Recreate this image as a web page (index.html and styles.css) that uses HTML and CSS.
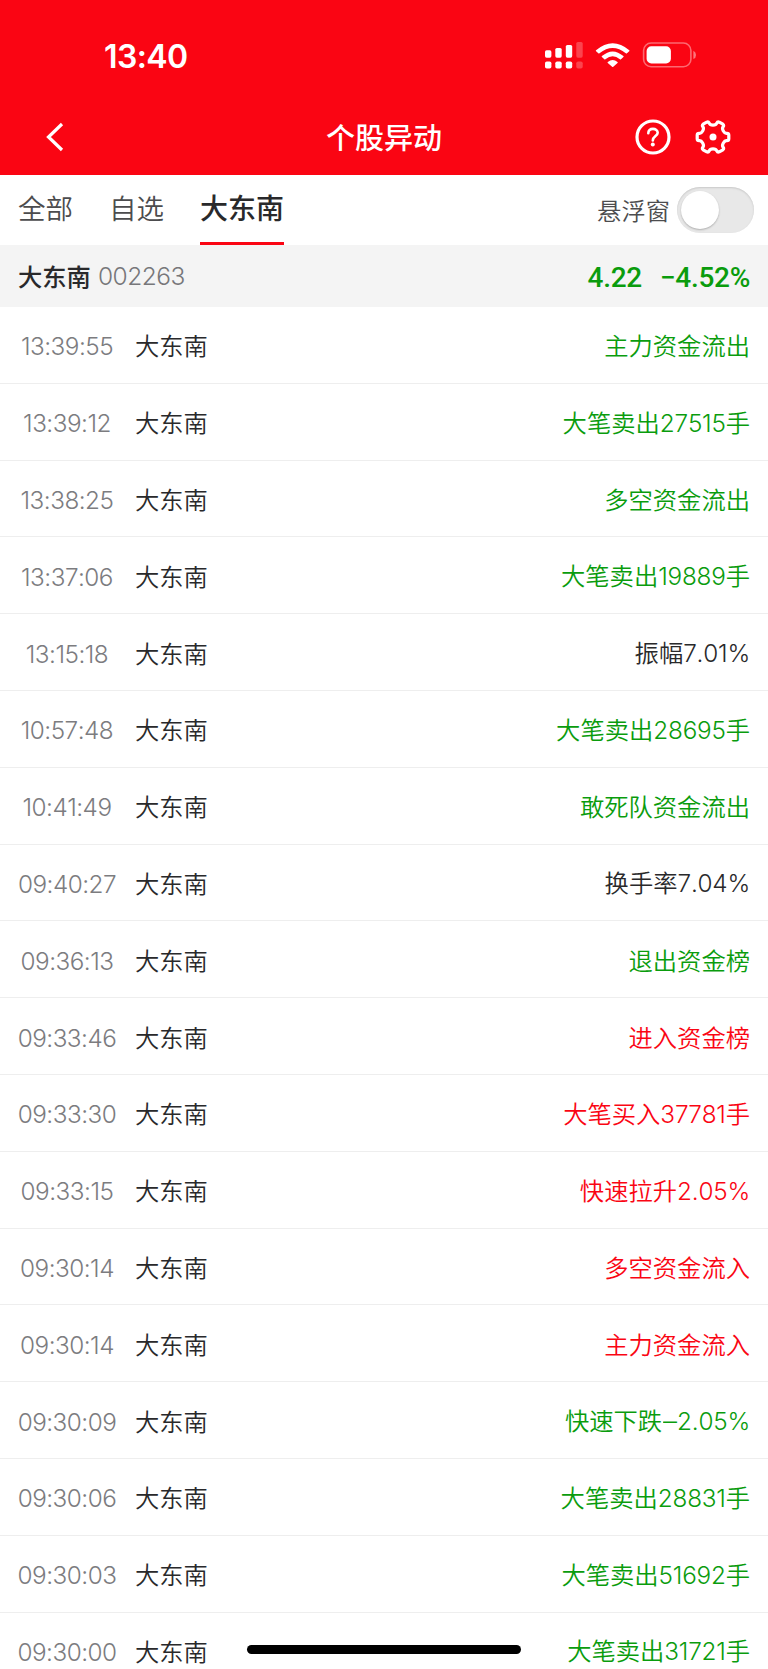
FILE: index.html
```html
<!DOCTYPE html>
<html lang="zh-CN">
<head>
<meta charset="utf-8">
<title>个股异动</title>
<link rel="stylesheet" href="styles.css">
</head>
<body>
<div class="screen">
  <header class="header">
    <div class="status">
      <span class="clock">13:40</span>
      <svg class="status-icons" width="156" height="34" viewBox="0 0 156 34" fill="#fff">
        <g><rect x="1" y="12.3" width="6.4" height="7.4" rx="1.6"/><rect x="11.3" y="10" width="6.4" height="9.7" rx="1.6"/><rect x="21.8" y="7" width="6.4" height="12.7" rx="1.6"/><rect x="1" y="23.5" width="6.4" height="7" rx="1.8"/><rect x="11.3" y="23.5" width="6.4" height="7" rx="1.8"/><rect x="21.8" y="23.5" width="6.4" height="7" rx="1.8"/></g>
        <g opacity=".25"><rect x="32.3" y="4" width="6.4" height="15.7" rx="1.6"/><rect x="32.3" y="23.5" width="6.4" height="7" rx="1.8"/></g>
        <path d="M52 12.2Q68.700 -1.800 85.300 12.200Q85.700 12.700 85.200 13.200L83 15.300Q82.400 15.800 81.800 15.300Q68.700 4.500 55.500 15.300Q54.900 15.800 54.300 15.300L52.100 13.200Q51.600 12.700 52 12.200ZM57.900 18.100Q68.700 8.700 79.400 18.100Q79.900 18.600 79.400 19.100L77 21.300Q76.500 21.700 75.900 21.200Q68.700 15.100 61.400 21.200Q60.800 21.700 60.300 21.300L57.900 19.100Q57.400 18.600 57.900 18.100ZM63.800 23.900Q68.700 20 73.500 23.900Q74 24.400 73.500 24.900L69.300 28.800Q68.700 29.300 68.100 28.800L63.800 24.900Q63.300 24.400 63.800 23.900Z"/>
        <rect x="99.600" y="5" width="47.300" height="23.700" rx="7.500" fill="none" stroke="#fff" stroke-opacity=".4" stroke-width="1.600"/>
        <path opacity=".45" d="M149.400 12.700Q152 13.900 152 16.900Q152 19.900 149.400 21.100Z"/>
        <rect x="102.600" y="8.300" width="24.300" height="17.200" rx="4.800"/>
      </svg>
    </div>
    <div class="nav">
      <svg class="back" width="20" height="32" viewBox="0 0 20 32"><path d="M17 3L3.500 16L17 29" fill="none" stroke="#fff" stroke-width="3.200" stroke-linecap="butt"/></svg>
      <h1 class="title">个股异动</h1>
      <div class="actions">
        <svg width="36" height="36" viewBox="0 0 36 36" fill="none" stroke="#fff"><circle cx="18" cy="18" r="16" stroke-width="3.200"/><path d="M13.300 14.300C13.300 11.400 15.200 9.900 17.900 9.900C20.600 9.900 22.700 11.400 22.700 13.800C22.700 17.100 17.800 17.200 17.800 21.500" stroke-width="2.600" stroke-linecap="round"/><circle cx="17.800" cy="25.600" r="2" fill="#fff" stroke="none"/></svg>
        <svg width="36" height="36" viewBox="0 0 36 36"><path d="M14.300 4.300C15.200 6.800 20.800 6.800 21.700 4.300Q22.600 2.500 24.300 3.200L27.800 5.200Q29.200 6.300 28.100 7.900C26.400 9.900 29.200 14.700 31.700 14.300Q33.700 14.200 33.800 16V20Q33.700 21.800 31.700 21.700C29.200 21.300 26.400 26.100 28.100 28.100Q29.200 29.700 27.800 30.800L24.300 32.800Q22.600 33.500 21.700 31.700C20.800 29.200 15.200 29.200 14.300 31.700Q13.400 33.500 11.700 32.800L8.200 30.800Q6.800 29.700 7.900 28.100C9.600 26.100 6.800 21.300 4.300 21.700Q2.300 21.800 2.200 20V16Q2.300 14.200 4.300 14.300C6.800 14.700 9.600 9.900 7.900 7.900Q6.800 6.300 8.200 5.200L11.700 3.200Q13.400 2.500 14.300 4.300Z" fill="none" stroke="#fff" stroke-width="3.200"/><circle cx="18" cy="18" r="3.500" fill="#fff"/></svg>
      </div>
    </div>
  </header>

  <nav class="tabs">
    <span class="tab">全部</span>
    <span class="tab">自选</span>
    <span class="tab active">大东南</span>
    <span class="float-label">悬浮窗</span>
    <span class="switch"><span class="knob"></span></span>
  </nav>

  <section class="quote">
    <span class="quote-name">大东南</span>
    <span class="quote-code">002263</span>
    <span class="quote-price">4.22</span>
    <span class="quote-change">−4.52%</span>
  </section>

  <main class="list">
    <div class="row"><span class="time">13:39:55</span><span class="name">大东南</span><span class="event down">主力资金流出</span></div>
    <div class="row"><span class="time">13:39:12</span><span class="name">大东南</span><span class="event down">大笔卖出<span class="num">27515</span>手</span></div>
    <div class="row"><span class="time">13:38:25</span><span class="name">大东南</span><span class="event down">多空资金流出</span></div>
    <div class="row"><span class="time">13:37:06</span><span class="name">大东南</span><span class="event down">大笔卖出<span class="num">19889</span>手</span></div>
    <div class="row"><span class="time">13:15:18</span><span class="name">大东南</span><span class="event">振幅<span class="num">7.01%</span></span></div>
    <div class="row"><span class="time">10:57:48</span><span class="name">大东南</span><span class="event down">大笔卖出<span class="num">28695</span>手</span></div>
    <div class="row"><span class="time">10:41:49</span><span class="name">大东南</span><span class="event down">敢死队资金流出</span></div>
    <div class="row"><span class="time">09:40:27</span><span class="name">大东南</span><span class="event">换手率<span class="num">7.04%</span></span></div>
    <div class="row"><span class="time">09:36:13</span><span class="name">大东南</span><span class="event down">退出资金榜</span></div>
    <div class="row"><span class="time">09:33:46</span><span class="name">大东南</span><span class="event up">进入资金榜</span></div>
    <div class="row"><span class="time">09:33:30</span><span class="name">大东南</span><span class="event up">大笔买入<span class="num">37781</span>手</span></div>
    <div class="row"><span class="time">09:33:15</span><span class="name">大东南</span><span class="event up">快速拉升<span class="num">2.05%</span></span></div>
    <div class="row"><span class="time">09:30:14</span><span class="name">大东南</span><span class="event up">多空资金流入</span></div>
    <div class="row"><span class="time">09:30:14</span><span class="name">大东南</span><span class="event up">主力资金流入</span></div>
    <div class="row"><span class="time">09:30:09</span><span class="name">大东南</span><span class="event down">快速下跌<span class="num"><span class="dash">–</span>2.05%</span></span></div>
    <div class="row"><span class="time">09:30:06</span><span class="name">大东南</span><span class="event down">大笔卖出<span class="num">28831</span>手</span></div>
    <div class="row"><span class="time">09:30:03</span><span class="name">大东南</span><span class="event down">大笔卖出<span class="num">51692</span>手</span></div>
    <div class="row"><span class="time">09:30:00</span><span class="name">大东南</span><span class="event down">大笔卖出<span class="num">31721</span>手</span></div>
  </main>
  <div class="home-indicator"></div>
</div>
</body>
</html>
```
FILE: styles.css
```css
* { box-sizing: border-box; }
body {
  margin: 0;
  background: #fff;
  font-family: "Noto Sans CJK SC", sans-serif;
  color: #29292b;
}
.screen {
  position: relative;
  width: 768px;
  height: 1669px;
  overflow: hidden;
}
.header {
  height: 175px;
  background: #fa0513;
  color: #fff;
}
.status {
  height: 100px;
  padding: 38px 68px 0 104px;
  display: flex;
  justify-content: space-between;
}
.clock {
  padding-top: 1px;
  font: 600 32px/36px Inter, sans-serif;
  letter-spacing: -0.6px;
}
.status-icons { display: block; }
.nav {
  height: 75px;
  padding: 0 37px 0 45px;
  display: grid;
  grid-template-columns: 1fr auto 1fr;
  align-items: center;
}
.nav > * { margin-top: -1px; }
.nav .title {
  margin: -4px 0 0 -8px;
  font-size: 29px;
  line-height: 40px;
  font-weight: 500;
}
.actions {
  display: flex;
  justify-content: flex-end;
  gap: 24px;
}
.actions svg, .back { display: block; }
.tabs {
  height: 70px;
  padding: 0 14px 0 18px;
  display: flex;
  align-items: center;
}
.tab {
  height: 70px;
  padding-top: 12px;
  margin-right: 36px;
  font-size: 27.5px;
  line-height: 40px;
  font-weight: 350;
  color: #4c4c4e;
}
.tab.active {
  margin-right: 0;
  font-size: 28px;
  font-weight: 500;
  color: #29292b;
  border-bottom: 3px solid #fa0513;
}
.float-label {
  margin: -2px 7px 0 auto;
  font-size: 24.300px;
  font-weight: 350;
  color: #4c4c4e;
}
.switch {
  width: 77px;
  height: 46px;
  padding: 4px;
  border-radius: 23px;
  background: #e8e8e8;
  box-shadow: inset 0 1px 2px #c8c8c8;
}
.knob {
  display: block;
  width: 38px;
  height: 38px;
  border-radius: 50%;
  background: #fff;
  box-shadow: 0 1px 2px rgba(0, 0, 0, 0.25);
}
.quote {
  height: 62px;
  padding: 0 18px;
  background: #f4f4f4;
  display: flex;
  align-items: center;
}
.quote-name {
  margin-top: -2px;
  font-size: 24.300px;
  font-weight: 500;
}
.quote-code {
  margin-left: 7px;
  font: 300 24.500px/32px Inter, sans-serif;
  letter-spacing: -0.5px;
  color: #77777a;
}
.quote-price, .quote-change {
  padding-top: 3px;
  font: 500 28px/32px Roboto, sans-serif;
  letter-spacing: -0.3px;
  color: #0a9c0d;
}
.quote-price { margin-left: auto; }
.quote-change { margin-left: 18px; }
.row {
  height: 76.800px;
  padding: 1px 18px 0 15px;
  display: flex;
  align-items: center;
  border-bottom: 1px solid #eee;
  font-size: 24.300px;
  line-height: 36px;
  font-weight: 350;
}
.time {
  width: 104px;
  padding-top: 2px;
  text-align: center;
  font-family: Inter, sans-serif;
  font-weight: 330;
  font-kerning: none;
  letter-spacing: -0.5px;
  white-space: nowrap;
  color: #7c7c7f;
}
.name { margin-left: 16px; }
.event { margin-left: auto; }
.num {
  font-family: Inter, sans-serif;
  font-weight: 330;
  font-kerning: none;
  letter-spacing: -0.2px;
}
.dash {
  display: inline-block;
  margin: 0 1px 0 2px;
  transform: scaleX(1.15);
}
.down { color: #0a9c0d; }
.up { color: #fa0513; }
.home-indicator {
  position: absolute;
  left: 247px;
  top: 1645px;
  width: 274px;
  height: 9px;
  border-radius: 5px;
  background: #000;
}
```
